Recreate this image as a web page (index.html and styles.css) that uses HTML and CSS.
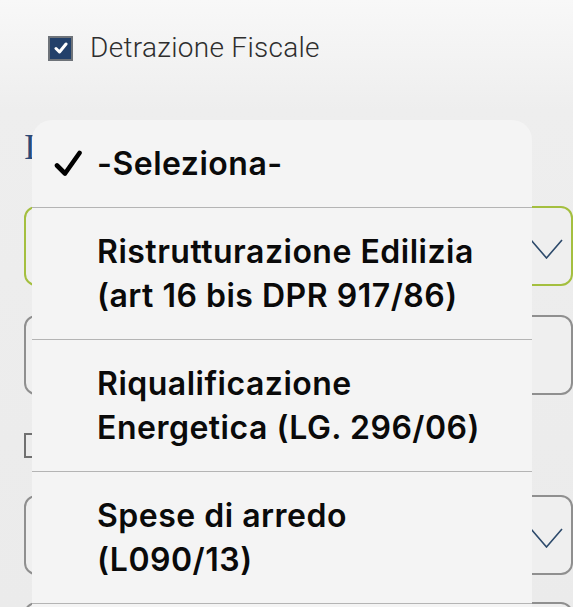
FILE: index.html
```html
<!DOCTYPE html>
<html lang="it">
<head>
<meta charset="utf-8">
<title>Detrazione Fiscale</title>
<link rel="stylesheet" href="styles.css">
</head>
<body>
<div class="page">
  <label class="check-row">
    <span class="cb cb-on">
      <svg width="14" height="12" viewBox="0 0 14 12"><path d="M2 6.5 L5.5 10 L12 2" fill="none" stroke="#fff" stroke-width="3" stroke-linecap="round" stroke-linejoin="round"/></svg>
    </span>
    <span class="check-label">Detrazione Fiscale</span>
  </label>

  <div class="section-title">I</div>

  <div class="field field-active">
    <svg class="chev" width="33" height="20" viewBox="0 0 33 20"><path d="M1 1 L16.5 19 L32 1" fill="none" stroke="#2d4a6b" stroke-width="1.6"/></svg>
  </div>

  <div class="field field-input"></div>

  <span class="cb cb-off cb-small"></span>

  <div class="field field-select">
    <svg class="chev" width="33" height="20" viewBox="0 0 33 20"><path d="M1 1 L16.5 19 L32 1" fill="none" stroke="#2d4a6b" stroke-width="1.6"/></svg>
  </div>

  <div class="field field-last"></div>
</div>

<div class="picker">
  <div class="opt opt-first">
    <svg class="tick" width="28" height="28" viewBox="0 0 28 28"><path d="M3 16.5 L11 24.5 L25.5 4" fill="none" stroke="#000" stroke-width="4.6" stroke-linecap="round" stroke-linejoin="round"/></svg>
    <span class="opt-text">-Seleziona-</span>
  </div>
  <div class="opt">
    <span class="opt-text">Ristrutturazione Edilizia<br>(art 16 bis DPR 917/86)</span>
  </div>
  <div class="opt">
    <span class="opt-text">Riqualificazione<br>Energetica (LG. 296/06)</span>
  </div>
  <div class="opt">
    <span class="opt-text">Spese di arredo<br>(L090/13)</span>
  </div>
  <div class="opt"></div>
</div>
</body>
</html>
```

FILE: styles.css
```css
html, body {
  margin: 0;
  padding: 0;
  height: 100%;
  overflow: hidden;
}

body {
  position: relative;
  background: linear-gradient(to bottom, #f8f8f8 0px, #eeeeee 110px, #ebebeb 100%);
  font-family: Roboto, "Liberation Sans", sans-serif;
}

.page {
  padding: 35px 0 0 24px;
}

.check-row {
  display: flex;
  align-items: center;
  height: 26px;
  margin-left: 24px;
}

.cb {
  box-sizing: border-box;
  width: 25px;
  height: 25px;
  border: 2px solid #6e7379;
  display: flex;
  align-items: center;
  justify-content: center;
  flex: none;
}

.cb-on {
  background: #22406a;
}

.cb-off {
  background: transparent;
  border-color: #707070;
}

.cb-small {
  display: block;
  margin-top: 38px;
}

.check-label {
  margin-left: 17px;
  font-family: Roboto, "Liberation Sans", sans-serif;
  font-weight: 300;
  font-size: 28px;
  line-height: 26px;
  letter-spacing: 0.3px;
  color: #2e2e2e;
}

.section-title {
  margin-top: 66px;
  font-family: "Liberation Serif", serif;
  font-size: 36px;
  line-height: 40px;
  color: #2b4a78;
  white-space: nowrap;
}

.field {
  box-sizing: border-box;
  height: 80px;
  border: 2px solid #8f8f8f;
  border-radius: 12px;
  background: #efefef;
  display: flex;
  align-items: center;
  justify-content: flex-end;
  padding-right: 8px;
}

.field-active {
  margin-top: 39px;
  border-color: #a4bf3f;
}

.field-input {
  margin-top: 29px;
}

.field-select {
  margin-top: 37px;
}

.field-last {
  margin-top: 27px;
}

.chev {
  display: block;
  margin-top: 6px;
}

.picker {
  position: absolute;
  left: 32px;
  top: 120px;
  width: 500px;
  height: 620px;
  background: #f4f4f4;
  border-radius: 20px 20px 0 0;
  overflow: hidden;
}

.opt {
  position: relative;
  box-sizing: border-box;
  height: 132px;
  border-top: 1px solid #b4b4b4;
  display: flex;
  align-items: center;
  padding-left: 65px;
}

.opt-first {
  height: 87px;
  border-top: none;
}

.tick {
  position: absolute;
  left: 22px;
  top: 29px;
}

.opt-text {
  font-family: Inter, "Noto Sans", sans-serif;
  font-weight: 600;
  font-size: 32px;
  line-height: 44px;
  color: #0a0a0a;
  letter-spacing: 0.5px;
}
```
